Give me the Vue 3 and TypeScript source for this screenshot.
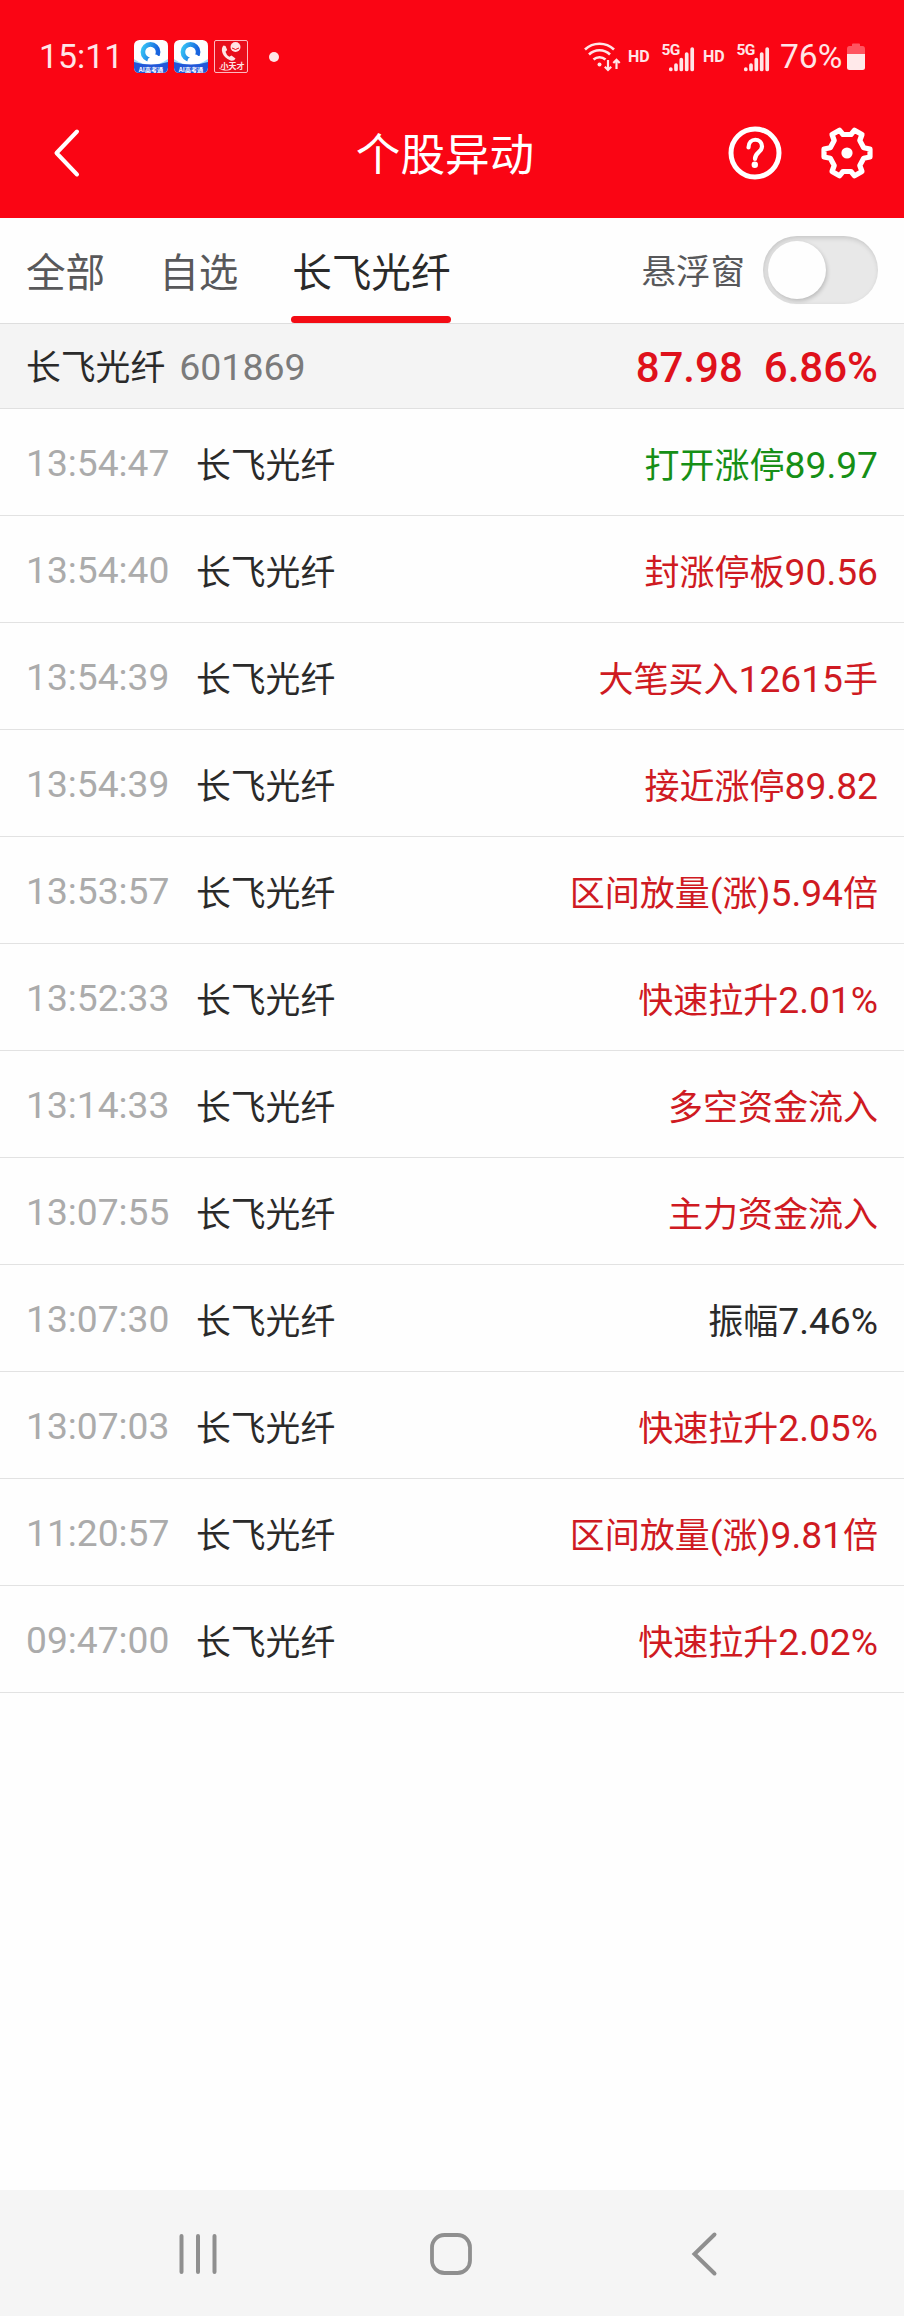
<script setup lang="ts">
interface Run {
  text: string
  cjk: boolean
}

interface Movement {
  time: string
  label: string
  tone: 'up' | 'down' | 'flat'
}

const stock = { name: '长飞光纤', code: '601869', price: '87.98', change: '6.86%' }

const tabs: { title: string; active: boolean }[] = [
  { title: '全部', active: false },
  { title: '自选', active: false },
  { title: '长飞光纤', active: true },
]

const movements: Movement[] = [
  { time: '13:54:47', label: '打开涨停89.97', tone: 'down' },
  { time: '13:54:40', label: '封涨停板90.56', tone: 'up' },
  { time: '13:54:39', label: '大笔买入12615手', tone: 'up' },
  { time: '13:54:39', label: '接近涨停89.82', tone: 'up' },
  { time: '13:53:57', label: '区间放量(涨)5.94倍', tone: 'up' },
  { time: '13:52:33', label: '快速拉升2.01%', tone: 'up' },
  { time: '13:14:33', label: '多空资金流入', tone: 'up' },
  { time: '13:07:55', label: '主力资金流入', tone: 'up' },
  { time: '13:07:30', label: '振幅7.46%', tone: 'flat' },
  { time: '13:07:03', label: '快速拉升2.05%', tone: 'up' },
  { time: '11:20:57', label: '区间放量(涨)9.81倍', tone: 'up' },
  { time: '09:47:00', label: '快速拉升2.02%', tone: 'up' },
]

// Chinese runs are set slightly smaller than the digits beside them.
function runs(label: string): Run[] {
  return (label.match(/[\u4e00-\u9fff]+|[^\u4e00-\u9fff]+/g) ?? []).map((text) => ({
    text,
    cjk: /[\u4e00-\u9fff]/.test(text),
  }))
}
</script>

<template>
  <div class="screen">
    <header class="top">
      <div class="status">
        <span class="clock">15:11</span>
        <svg v-for="n in 2" :key="n" class="app-icon" viewBox="0 0 34 33">
          <defs>
            <linearGradient :id="'ring' + n" x1="0" y1="0" x2="1" y2="0.3">
              <stop offset="0" stop-color="#35c3f5" />
              <stop offset="1" stop-color="#1763df" />
            </linearGradient>
            <clipPath :id="'tile' + n"><rect width="34" height="33" rx="5.5" /></clipPath>
          </defs>
          <g :clip-path="`url(#tile${n})`">
            <rect width="34" height="33" fill="#fdfeff" />
            <path d="M0 19Q17 31 34 19V33H0z" fill="#9be0fa" />
            <path d="M0 22Q17 27 34 22V33H0z" fill="#2257d8" />
            <circle cx="16.500" cy="12" r="7.600" fill="none" :stroke="`url(#ring${n})`" stroke-width="4.600" />
            <path d="M14 23a4 4 0 0 1 1.500-5.500 5.500 5.500 0 0 1 9-1.500 4 4 0 0 1 4 6Q21 25 14 23z" fill="#fff" />
            <text x="17" y="31.600" text-anchor="middle" class="icon-text">AI高考通</text>
          </g>
        </svg>
        <svg class="app-icon" viewBox="0 0 34 33">
          <rect x="0.500" y="0.500" width="33" height="32" rx="1.500" fill="#e80d1b" stroke="#ffb9c0" />
          <circle cx="21.500" cy="7" r="5" fill="#ffe4e6" />
          <path d="M18 8q3.500 3 7 0" fill="none" stroke="#e80d1b" stroke-width="1" />
          <path d="M9.500 5.500C6 8.500 8 17.500 16.500 20.500q3.500 1 5-2l-4-3-2.200 1.200q-3-1.700-3.800-5l1.700-1.700-1.700-4z" fill="#ffe4e6" />
          <path d="M5 28q6 4 12 1" fill="none" stroke="#ffb9c0" stroke-width="1" />
          <text x="18.500" y="28.500" text-anchor="middle" class="brand-text">小天才</text>
        </svg>
        <i class="dot"></i>
        <div class="system">
          <svg class="wifi" viewBox="0 0 37 30" fill="none" stroke="#ffe5e7" stroke-width="2.600">
            <path d="M1 7.500a21 21 0 0 1 29 0" />
            <path d="M5 12.500a15 15 0 0 1 21 0" />
            <path d="M9.500 17.500a9 9 0 0 1 12 0" />
            <circle cx="15.500" cy="22.500" r="2" fill="#ffe5e7" stroke="none" />
            <path d="M24 18v10M20.800 24.800l3.200 3.200 3.200-3.200M32.500 27V18M29.300 21l3.200-3.200 3.200 3.200" stroke-width="2.200" />
          </svg>
          <template v-for="n in 2" :key="n">
            <span class="hd">HD</span>
            <svg class="signal" viewBox="0 0 34 30">
              <text x="-0.500" y="12.500" class="network">5G</text>
              <g stroke="#ffe5e7" stroke-width="3.700" stroke-linecap="round">
                <path d="M8.800 27v.5M14 23v4.500M19.300 17.500v10M24.700 12v15.500M30.200 7v20.500" />
              </g>
            </svg>
          </template>
          <span class="percent">76%</span>
          <svg class="battery" viewBox="0 0 18 28">
            <path d="M5 3V1.500Q5 .5 6 .5h6q1 0 1 1V3h2.500Q18 3 18 6v5H0V6q0-3 2.500-3z" fill="#ff5460" />
            <path d="M0 11h18v13.500q0 2.500-2.500 2.500h-13Q0 27 0 24.500z" fill="#ffe9ea" />
          </svg>
        </div>
      </div>
      <div class="titlebar">
        <svg class="back" viewBox="0 0 30 52" fill="none" stroke="#fff" stroke-width="4" stroke-linecap="round" stroke-linejoin="round">
          <path d="M25 4.500 4.500 26 25 47.500" />
        </svg>
        <h1>个股异动</h1>
        <div class="actions">
          <svg viewBox="0 0 54 54" fill="none" stroke="#fff">
            <circle cx="27" cy="27" r="24" stroke-width="5" />
            <path d="M20.500 21.500C20.500 10.800 34 11.800 34 20.500c0 5.700-7 5.800-7 12.500" stroke-width="4.200" stroke-linecap="round" />
            <circle cx="26.800" cy="38.700" r="3.200" fill="#fff" stroke="none" />
          </svg>
          <svg viewBox="0 0 54 54" fill="none" stroke="#fff" stroke-width="5.200" stroke-linejoin="round">
            <path d="M19.500 4.200 23 8.500h8l3.500-4.300 7.500 4.300-2.200 6 3.900 7.200 6.300 1.300v8l-6.300 1.300-3.900 7.200 2.200 6-7.500 4.300L31 45.500h-8l-3.500 4.300-7.500-4.300 2.200-6-3.900-7.200-6.300-1.300v-8l6.300-1.300 3.900-7.200-2.200-6z" />
            <circle cx="27" cy="27" r="5.600" fill="#fff" stroke="none" />
          </svg>
        </div>
      </div>
    </header>

    <nav class="tabs">
      <div v-for="tab in tabs" :key="tab.title" class="tab" :class="{ active: tab.active }">{{ tab.title }}</div>
      <span class="float-label">悬浮窗</span>
      <div class="toggle"><i></i></div>
    </nav>

    <section class="quote">
      <span class="quote-name">{{ stock.name }}</span>
      <span class="quote-code">{{ stock.code }}</span>
      <span class="quote-price">{{ stock.price }}</span>
      <span class="quote-change">{{ stock.change }}</span>
    </section>

    <ul class="list">
      <li v-for="item in movements" :key="item.time + item.label">
        <time>{{ item.time }}</time>
        <span class="name">{{ stock.name }}</span>
        <span class="label" :class="item.tone"><span v-for="(run, i) in runs(item.label)" :key="i" :class="{ cjk: run.cjk }">{{ run.text }}</span></span>
      </li>
    </ul>

    <footer class="softkeys">
      <svg viewBox="0 0 48 48" stroke="#8f8f8f" stroke-width="4" stroke-linecap="round">
        <path d="M7.500 7v36M24 7v36M40.500 7v36" />
      </svg>
      <svg viewBox="0 0 48 48" fill="none" stroke="#8f8f8f" stroke-width="3.800">
        <rect x="5" y="6" width="38" height="38" rx="12.500" />
      </svg>
      <svg viewBox="0 0 48 48" fill="none" stroke="#8f8f8f" stroke-width="4" stroke-linecap="round">
        <path d="M34.500 5.500 14.500 25l20 19.500" />
      </svg>
    </footer>
  </div>
</template>

<style>
body {
  margin: 0;
  background: #fefefe;
}
</style>

<style scoped>
.screen {
  width: 904px;
  height: 2316px;
  display: flex;
  flex-direction: column;
  background: #fefefe;
  color: #2a2a2a;
  font-family: Roboto, "Noto Sans CJK SC", sans-serif;
  overflow: hidden;
  white-space: nowrap;
}
svg {
  display: block;
  flex: none;
}
.top {
  height: 218px;
  background: #fa0514;
  color: #fff;
}
.status {
  height: 88px;
  box-sizing: border-box;
  padding: 25px 39px 0 39px;
  display: flex;
  align-items: center;
  color: #ffe5e7;
}
.clock {
  width: 81px;
  margin-right: 14px;
  font-size: 33.8px;
  line-height: 63px;
}
.app-icon {
  width: 34px;
  height: 33px;
  margin-right: 6px;
}
.icon-text {
  font: 700 6.2px "Noto Sans CJK SC", sans-serif;
  fill: #fff;
}
.brand-text {
  font: 700 8px "Noto Sans CJK SC", sans-serif;
  fill: #ffe4e6;
}
.dot {
  width: 10px;
  height: 10px;
  margin-left: 15px;
  border-radius: 50%;
  background: #ffe5e7;
}
.system {
  margin-left: auto;
  display: flex;
  align-items: center;
}
.wifi {
  width: 37px;
  height: 30px;
}
.hd {
  width: 34px;
  margin-left: 7px;
  font-size: 16px;
  font-weight: 700;
  line-height: 20px;
}
.signal {
  width: 34px;
  height: 30px;
  overflow: visible;
}
.network {
  font: 700 15.5px Roboto, sans-serif;
  letter-spacing: -0.7px;
  fill: #ffe5e7;
}
.percent {
  margin-left: 9px;
  width: 67px;
  font-size: 33.6px;
  line-height: 63px;
}
.battery {
  width: 18px;
  height: 28px;
}
.titlebar {
  height: 130px;
  display: grid;
  grid-template-columns: 130px 1fr 130px;
  align-items: center;
  padding: 0 28px 0 52px;
}
.back {
  width: 30px;
  height: 52px;
}
h1 {
  margin: 0;
  padding: 5px 38px 0 0;
  font-size: 44.6px;
  font-weight: 400;
  line-height: 60px;
  text-align: center;
}
.actions {
  display: flex;
  justify-content: flex-end;
  gap: 38px;
  margin-right: 2px;
}
.actions svg {
  width: 54px;
  height: 54px;
}
.tabs {
  height: 106px;
  box-sizing: border-box;
  border-bottom: 1px solid #dedede;
  padding: 0 26px;
  display: flex;
}
.tab {
  height: 105px;
  box-sizing: border-box;
  margin-right: 54px;
  font-size: 39.6px;
  line-height: 112px;
  color: #58585a;
}
.tab.active {
  position: relative;
  width: 160px;
  margin-left: -1px;
  margin-right: auto;
  color: #2a2a2a;
  text-align: center;
}
.tab.active::after {
  content: "";
  position: absolute;
  left: 0;
  right: 0;
  bottom: 0;
  height: 7px;
  border-radius: 4px;
  background: #f30b14;
}
.float-label {
  margin-right: 18px;
  font-size: 34.5px;
  line-height: 109px;
  color: #58585a;
}
.toggle {
  width: 115px;
  height: 68px;
  margin-top: 18px;
  box-sizing: border-box;
  padding: 5px;
  border-radius: 34px;
  background: #e8e8e8;
  box-shadow: inset 1px 2px 5px rgba(0, 0, 0, 0.15);
}
.toggle i {
  display: block;
  width: 58px;
  height: 58px;
  border-radius: 50%;
  background: #fefefe;
  box-shadow: 1px 2px 4px rgba(0, 0, 0, 0.2);
}
.quote {
  height: 85px;
  box-sizing: border-box;
  border-bottom: 1px solid #e0e0e0;
  background: #f4f4f4;
  padding: 0 26px;
  display: flex;
}
.quote-name {
  font-size: 34.8px;
  line-height: 89px;
}
.quote-code {
  margin-left: 14px;
  font-size: 37.5px;
  line-height: 86.4px;
  color: #7b7b7b;
}
.quote-price,
.quote-change {
  font-size: 42px;
  font-weight: 500;
  line-height: 88px;
  color: #df111b;
}
.quote-price {
  margin-left: auto;
  margin-right: 21px;
}
.list {
  flex: 1;
  margin: 0;
  padding: 0;
  list-style: none;
}
.list li {
  height: 107px;
  box-sizing: border-box;
  border-bottom: 1px solid #e2e2e2;
  padding: 0 26px;
  display: flex;
}
time {
  width: 170px;
  font-size: 37.2px;
  line-height: 108.6px;
  color: #ababab;
}
.name {
  font-size: 34.8px;
  line-height: 115px;
}
.label {
  margin-left: auto;
  font-size: 37.2px;
  line-height: 113px;
}
.cjk {
  font-size: 35px;
}
.up {
  color: #cf1a22;
}
.down {
  color: #168f16;
}
.softkeys {
  height: 126px;
  background: #f5f5f5;
  display: flex;
  justify-content: space-between;
  align-items: center;
  padding: 0 176px 0 174px;
}
.softkeys svg {
  width: 48px;
  height: 48px;
}
</style>
